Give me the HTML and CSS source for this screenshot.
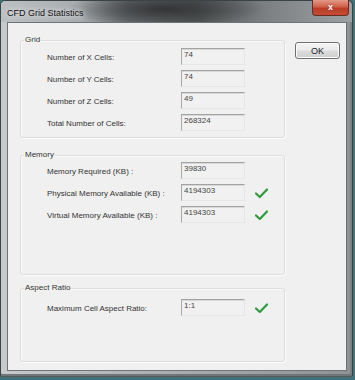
FILE: index.html
```html
<!DOCTYPE html>
<html>

<head>
    <link rel="stylesheet" href="styles.css">
</head>

<body>
    <div class="window">
        <div class="titlebar">
            <span class="title">CFD Grid Statistics</span>
            <span class="close">x</span>
        </div>
        <div class="client">
            <div class="groups">
                <fieldset class="group group-grid">
                    <legend>Grid</legend>
                    <div class="rows">
                        <div class="row"><span class="label">Number of X Cells:</span><span class="field">74</span></div>
                        <div class="row"><span class="label">Number of Y Cells:</span><span class="field">74</span></div>
                        <div class="row"><span class="label">Number of Z Cells:</span><span class="field">49</span></div>
                        <div class="row"><span class="label">Total Number of Cells:</span><span class="field">268324</span></div>
                    </div>
                </fieldset>
                <fieldset class="group group-memory">
                    <legend>Memory</legend>
                    <div class="rows">
                        <div class="row"><span class="label">Memory Required (KB) :</span><span class="field">39830</span></div>
                        <div class="row">
                            <span class="label">Physical Memory Available (KB) :</span><span class="field">4194303</span>
                            <svg class="check" width="13" height="11" viewBox="0 0 13 11"><path d="M1 5.5 L4.8 9 L12 1.5" /></svg>
                        </div>
                        <div class="row">
                            <span class="label">Virtual Memory Available (KB) :</span><span class="field">4194303</span>
                            <svg class="check" width="13" height="11" viewBox="0 0 13 11"><path d="M1 5.5 L4.8 9 L12 1.5" /></svg>
                        </div>
                    </div>
                </fieldset>
                <fieldset class="group group-aspect">
                    <legend>Aspect Ratio</legend>
                    <div class="rows">
                        <div class="row">
                            <span class="label">Maximum Cell Aspect Ratio:</span><span class="field">1:1</span>
                            <svg class="check" width="13" height="11" viewBox="0 0 13 11"><path d="M1 5.5 L4.8 9 L12 1.5" /></svg>
                        </div>
                    </div>
                </fieldset>
            </div>
            <button class="ok">OK</button>
        </div>
    </div>
</body>

</html>
```

FILE: styles.css
```css
body {
    margin: 0;
    background-color: #41727a;
    font-family: "Liberation Sans", Arial, sans-serif;
}

.window {
    box-sizing: border-box;
    width: 353px;
    height: 377px;
    display: flex;
    flex-direction: column;
    padding: 0 5px 5px 6px;
    border: 1px solid #3a4346;
    border-bottom-color: #555a5c;
    border-radius: 5px 5px 2px 2px;
    background: linear-gradient(90deg, #c6cacc 0%, #aeb2b4 40%, #8f9294 100%);
    box-shadow: inset 0 -2px 0 #727577, inset -2px 0 0 #7d8082;
}

.titlebar {
    height: 21px;
    display: flex;
    align-items: center;
    margin: 0 -5px 0 -6px;
    padding: 0 4px 0 6px;
    border-radius: 5px 5px 0 0;
    background:
        radial-gradient(ellipse 100px 18px at 165px 8px, rgba(48, 50, 52, 0.95), rgba(60, 62, 64, 0) 100%),
        linear-gradient(90deg, #bcc0c3 0%, #a9adaf 22%, #6d7072 36%, #555859 55%, #7c7f81 75%, #9ea1a3 100%);
}

.title {
    flex: 1;
    font-size: 9px;
    padding-top: 2px;
    color: #111;
    text-shadow: 0 0 4px #e8eaeb, 0 0 6px #dfe1e2;
}

.close {
    align-self: flex-start;
    width: 37px;
    height: 16px;
    margin: -1px -1px 0 0;
    box-sizing: border-box;
    border: 1px solid #6a2c22;
    border-top: none;
    border-radius: 0 0 4px 4px;
    background: linear-gradient(#e29a88 0%, #cf6149 45%, #bb3b26 55%, #c44d35 100%);
    color: #fff;
    font-size: 9px;
    font-weight: bold;
    line-height: 14px;
    text-align: center;
    text-shadow: 0 0 2px #7a2418;
}

.client {
    flex: 1;
    box-sizing: border-box;
    display: flex;
    align-items: flex-start;
    gap: 10px;
    padding: 12px 0 0 12px;
    background-color: #f0f0f0;
    border: 1px solid #6f7376;
}

.groups {
    width: 265px;
}

.group {
    box-sizing: border-box;
    width: 265px;
    margin: 0;
    padding: 0 3px;
    border: 1px solid #dcdcdc;
    border-radius: 3px;
    box-shadow: inset 1px 1px 0 #fbfbfb, 1px 1px 0 #fbfbfb;
}

.group legend {
    font-size: 8px;
    line-height: 10px;
    padding: 0 1px;
    color: #333;
}

.group-grid {
    height: 103px;
    padding-top: 3px;
}

.group-memory {
    height: 125px;
    margin-top: 12px;
    padding-top: 2px;
}

.group-aspect {
    height: 79px;
    margin-top: 8px;
    padding-top: 6px;
}

.rows {
    display: flex;
    flex-direction: column;
    gap: 5px;
    padding-left: 23px;
}

.row {
    display: flex;
    align-items: flex-start;
}

.label {
    width: 134px;
    padding-top: 5px;
    font-size: 8px;
    line-height: 10px;
    color: #333;
    white-space: nowrap;
}

.field {
    box-sizing: border-box;
    width: 64px;
    height: 17px;
    padding: 0 2px;
    font-size: 8px;
    line-height: 12px;
    color: #444;
    background-color: #f1f1f1;
    border: 1px solid #e6e6e6;
    border-top-color: #a3a3a3;
    border-left-color: #a8a8a8;
    box-shadow: inset 0 1px 0 #d8d8d8;
}

.check {
    margin: 4px 0 0 10px;
}

.check path {
    fill: none;
    stroke: #2f9a3c;
    stroke-width: 2.2;
    stroke-linecap: round;
    stroke-linejoin: round;
}

.ok {
    width: 45px;
    height: 17px;
    margin-top: 7px;
    padding: 0;
    font-family: "Liberation Sans", Arial, sans-serif;
    font-size: 9px;
    color: #222;
    border: 1px solid #707070;
    border-radius: 3px;
    background: linear-gradient(#f3f3f3 0%, #ebebeb 48%, #dcdcdc 52%, #cfcfcf 100%);
    box-shadow: inset 0 0 0 1px #fbfbfb;
}
```
